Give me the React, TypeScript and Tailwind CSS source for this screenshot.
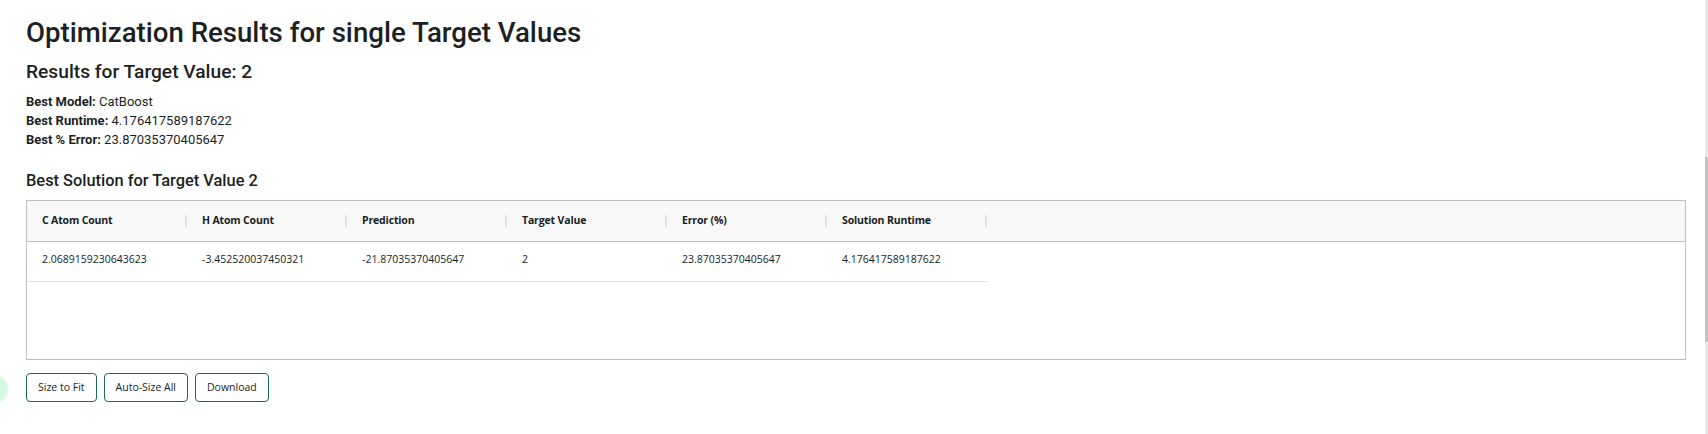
const columns = [
  "C Atom Count",
  "H Atom Count",
  "Prediction",
  "Target Value",
  "Error (%)",
  "Solution Runtime",
];

const row = [
  "2.0689159230643623",
  "-3.452520037450321",
  "-21.87035370405647",
  "2",
  "23.87035370405647",
  "4.176417589187622",
];

const gridFont = { fontFamily: '"Open Sans", "Noto Sans", sans-serif' };

export default function App() {
  return (
    <div className="relative flex h-[434px] w-full overflow-hidden bg-white">
      {/* floating helper bubble, mostly off screen */}
      <div className="absolute left-[-20px] top-[375px] h-[28px] w-[28px] rounded-full bg-[#d3f8e4] blur-[1px]" />

      <main
        className="flex-1 pl-[26px] pr-[19px] pt-[16px] text-[#1c1f23]"
        style={{ fontFamily: 'Roboto, "Liberation Sans", sans-serif' }}
      >
        <h1 className="text-[27.6px] font-medium leading-[34px]">
          Optimization Results for single Target Values
        </h1>

        <h2 className="mt-[10px] text-[19.2px] font-medium leading-[24px]">
          Results for Target Value: 2
        </h2>

        <div className="mt-[8px] text-[13px] leading-[19px]">
          <p>
            <span className="font-bold">Best Model:</span> CatBoost
          </p>
          <p>
            <span className="font-bold">Best Runtime:</span> 4.176417589187622
          </p>
          <p>
            <span className="font-bold">Best % Error:</span> 23.87035370405647
          </p>
        </div>

        <h3 className="mt-[22px] text-[16.4px] font-medium leading-[20px]">
          Best Solution for Target Value 2
        </h3>

        <div
          className="mt-[9px] h-[160px] border border-[#babfc7] bg-white text-[10.5px] text-[#181d1f]"
          style={gridFont}
        >
          <div className="flex h-[41px] border-b border-[#babfc7] bg-[#f8f8f8]">
            {columns.map((col) => (
              <div
                key={col}
                className="flex w-[160px] items-center justify-between pl-[15px] font-bold tracking-[-0.15px]"
              >
                <span>{col}</span>
                <span className="h-[12px] w-[2px] bg-[#dde2eb]" />
              </div>
            ))}
          </div>
          <div className="flex h-[40px] w-[960px] border-b border-[#dde2eb]">
            {row.map((cell, i) => (
              <div key={i} className="flex w-[160px] items-center pb-[3px] pl-[15px]">
                {cell}
              </div>
            ))}
          </div>
        </div>

        <div className="mt-[13px] flex gap-[7px] text-[10.5px]" style={gridFont}>
          {["Size to Fit", "Auto-Size All", "Download"].map((label) => (
            <button
              key={label}
              className="h-[29px] rounded-[4px] border border-[#1b6e4f] bg-white px-[11px] text-[#181d1f]"
            >
              {label}
            </button>
          ))}
        </div>
      </main>

      <aside className="flex w-[3px] flex-col bg-[#e9e9e9] pt-[157px]">
        <div className="h-[185px] bg-[#c1c1c1]" />
      </aside>
    </div>
  );
}
